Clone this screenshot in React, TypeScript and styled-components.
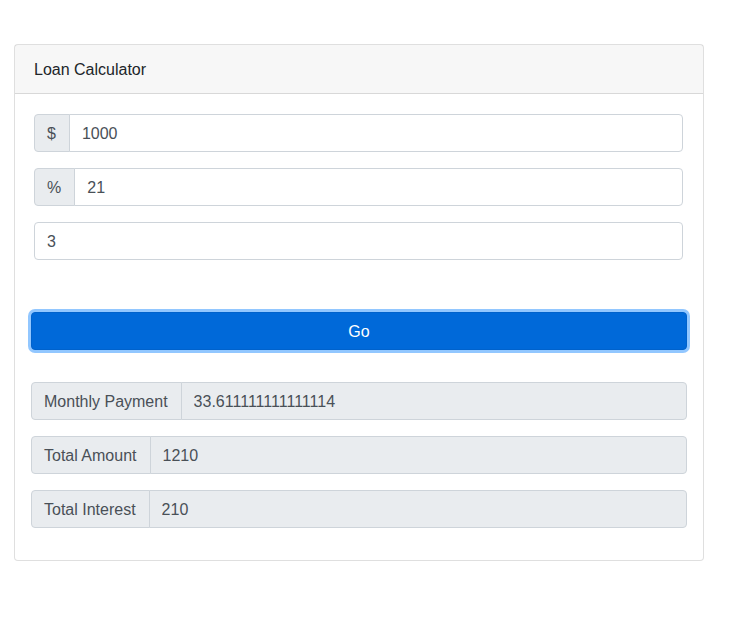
import React from "react";
import styled, { createGlobalStyle } from "styled-components";

const Global = createGlobalStyle`
  * { box-sizing: border-box; }
  html, body { margin: 0; padding: 0; background: #fff; }
  body {
    font-family: "Liberation Sans", Arial, "Noto Sans", sans-serif;
    font-size: 16px;
    line-height: 1.5;
    color: #212529;
  }
`;

const Page = styled.div`
  padding: 44px 28px 40px 14px;
`;

const Card = styled.div`
  width: 690px;
  border: 1px solid rgba(0, 0, 0, 0.125);
  border-radius: 4px;
  background: #fff;
  display: flex;
  flex-direction: column;
`;

const CardHeader = styled.div`
  padding: 13px 19px 11px;
  background: rgba(0, 0, 0, 0.03);
  border-bottom: 1px solid rgba(0, 0, 0, 0.125);
  font-size: 16px;
  line-height: 24px;
`;

const CardBody = styled.div`
  padding: 20px 16px 32px 16px;
  display: flex;
  flex-direction: column;
`;

const Fields = styled.div`
  padding: 0 4px 0 3px;
  display: flex;
  flex-direction: column;
  gap: 16px;
`;

const Group = styled.div`
  display: flex;
  height: 38px;
`;

const Addon = styled.span`
  display: flex;
  align-items: center;
  padding: 7px 13px 5px 12px;
  background: #e9ecef;
  border: 1px solid #ced4da;
  border-radius: 4px 0 0 4px;
  color: #495057;
  font-size: 16px;
  line-height: 24px;
  white-space: nowrap;
`;

const Field = styled.input<{ $attached?: boolean; $readonly?: boolean }>`
  flex: 1;
  min-width: 0;
  height: 38px;
  padding: 7px 12px 5px;
  font-family: inherit;
  font-size: 16px;
  line-height: 24px;
  color: #495057;
  background: ${(p) => (p.$readonly ? "#e9ecef" : "#fff")};
  border: 1px solid #ced4da;
  border-radius: ${(p) => (p.$attached ? "0 4px 4px 0" : "4px")};
  margin-left: ${(p) => (p.$attached ? "-1px" : "0")};
  outline: none;
`;

const GoButton = styled.button`
  margin-top: 52px;
  height: 38px;
  width: 100%;
  padding: 7px 12px 5px;
  border: 1px solid #0062cc;
  border-radius: 4px;
  background: #0069d9;
  color: #fff;
  font-family: inherit;
  font-size: 16px;
  line-height: 24px;
  box-shadow: 0 0 0 3px rgba(38, 143, 255, 0.5);
  cursor: pointer;
`;

const Results = styled.div`
  margin-top: 32px;
  display: flex;
  flex-direction: column;
  gap: 16px;
`;

const results = [
  { label: "Monthly Payment", value: "33.611111111111114" },
  { label: "Total Amount", value: "1210" },
  { label: "Total Interest", value: "210" },
];

export default function App() {
  return (
    <>
      <Global />
      <Page>
        <Card>
          <CardHeader>Loan Calculator</CardHeader>
          <CardBody>
            <Fields>
              <Group>
                <Addon>$</Addon>
                <Field $attached defaultValue="1000" />
              </Group>
              <Group>
                <Addon>%</Addon>
                <Field $attached defaultValue="21" />
              </Group>
              <Group>
                <Field defaultValue="3" />
              </Group>
            </Fields>
            <GoButton>Go</GoButton>
            <Results>
              {results.map((r) => (
                <Group key={r.label}>
                  <Addon>{r.label}</Addon>
                  <Field $attached $readonly readOnly defaultValue={r.value} />
                </Group>
              ))}
            </Results>
          </CardBody>
        </Card>
      </Page>
    </>
  );
}
